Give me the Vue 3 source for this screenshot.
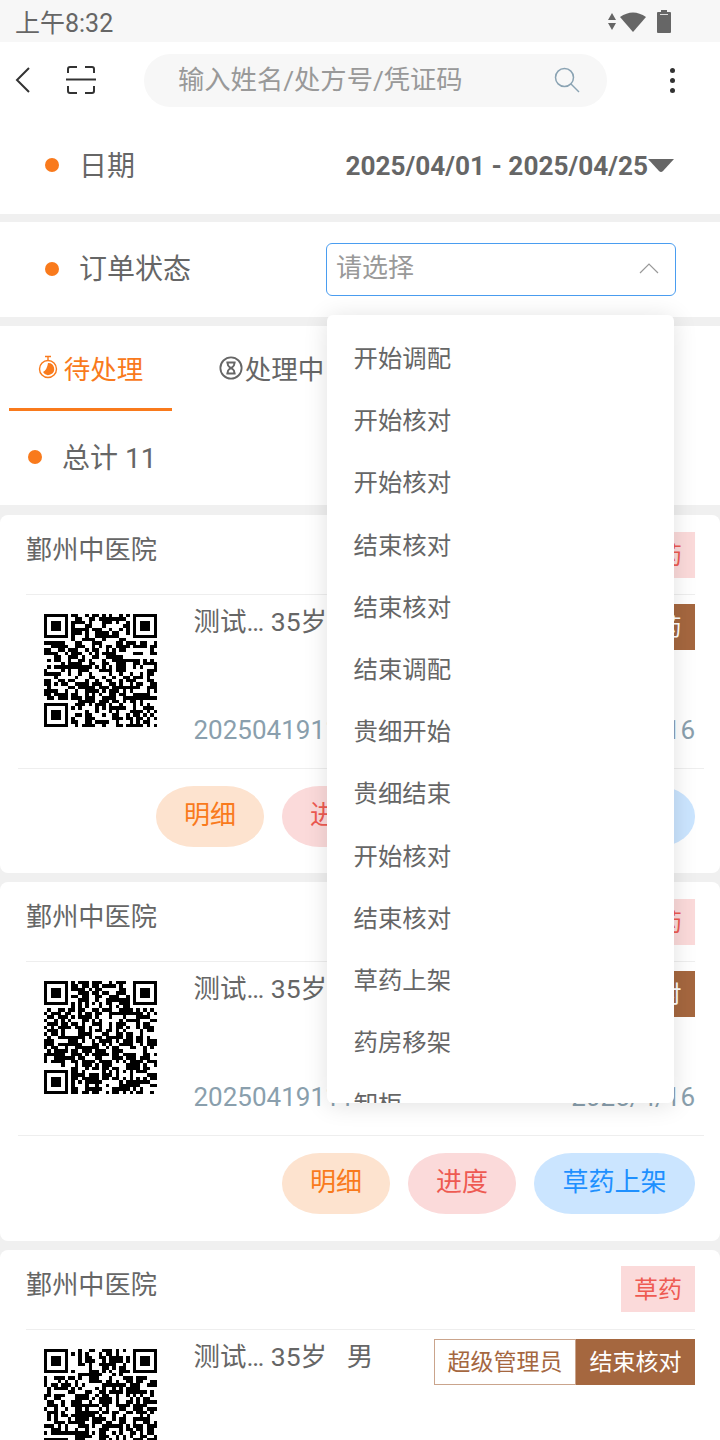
<template>
  <div class="page">
    <div class="status-bar">
      <span class="clock">上午8:32</span>
      <div class="status-icons">
        <svg class="arrows" width="8" height="17" viewBox="0 0 8 17"><path d="M4 0 L8 7 H0 Z M0 10 H8 L4 17 Z" fill="#666"/></svg>
        <svg class="wifi" width="26" height="21" viewBox="0 0 26 21"><path d="M0 6 Q13 -3 26 6 L13 21 Z" fill="#666"/></svg>
        <svg width="14" height="23" viewBox="0 0 14 23"><path d="M4 0 H10 V2 H13 Q14 2 14 3 V22 Q14 23 13 23 H1 Q0 23 0 22 V3 Q0 2 1 2 H4 Z" fill="#666"/><path d="M3 4.5 H11" stroke="#ddd" stroke-width="1"/></svg>
      </div>
    </div>

    <div class="nav">
      <svg class="back" width="18" height="28" viewBox="0 0 18 28"><path d="M15 2 L3 14 L15 26" fill="none" stroke="#333" stroke-width="2"/></svg>
      <svg class="scan" width="30" height="30" viewBox="0 0 30 30" fill="none" stroke="#333" stroke-width="2">
        <path d="M2 8 V4 Q2 2 4 2 H11 M19 2 H26 Q28 2 28 4 V8 M2 21 V26 Q2 28 4 28 H11 M19 28 H26 Q28 28 28 26 V21"/>
        <path d="M0 14.5 H30"/>
      </svg>
      <div class="search">
        <span class="search-text">输入姓名/处方号/凭证码</span>
        <svg width="26" height="26" viewBox="0 0 26 26" fill="none" stroke="#8aa3b3" stroke-width="1.5"><circle cx="10.5" cy="10.5" r="9"/><path d="M17 17 L25 25"/></svg>
      </div>
      <div class="more"><i></i><i></i><i></i></div>
    </div>

    <div class="row date-row">
      <span class="dot"></span>
      <span class="label">日期</span>
      <span class="date-range">2025/04/01 - 2025/04/25</span>
      <svg class="caret" width="26" height="15" viewBox="0 0 26 15"><path d="M0 1 H26 L15 13 Q13 15 11 13 Z" fill="#666"/></svg>
    </div>

    <div class="row status-row">
      <span class="dot"></span>
      <span class="label">订单状态</span>
      <div class="select">
        <span>请选择</span>
        <svg width="20" height="12" viewBox="0 0 20 12"><path d="M1 11 L10 2 L19 11" fill="none" stroke="#999" stroke-width="1.2"/></svg>
      </div>
    </div>

    <div class="tabs">
      <div class="tab active">
        <svg width="20" height="24" viewBox="0 0 20 24"><circle cx="10" cy="14" r="8.5" fill="none" stroke="#f97a1c" stroke-width="1.4"/><path d="M7 1.5 H13 M10 2 V5" stroke="#f97a1c" stroke-width="1.4"/><path d="M10 8 A6 6 0 1 1 5 17 Q9 15 10 8 Z" fill="#f97a1c"/></svg>
        <span>待处理</span>
      </div>
      <div class="tab">
        <svg width="24" height="24" viewBox="0 0 26 26" fill="none" stroke="#666" stroke-width="2"><circle cx="13" cy="13" r="11.5"/><path d="M8 7 H18 M8 19 H18 M9.5 7 V9 Q9.5 11 13 13 Q16.5 11 16.5 9 V7 M9.5 19 V17 Q9.5 15 13 13 Q16.5 15 16.5 17 V19"/></svg>
        <span>处理中</span>
      </div>
    </div>

    <div class="total">
      <span class="dot"></span>
      <span class="label">总计 11</span>
    </div>

    <div v-for="card in cards" :key="card.id" class="card">
      <div class="card-head">
        <span class="hospital">鄞州中医院</span>
        <span class="kind">草药</span>
      </div>
      <div class="card-body">
        <svg class="qr" viewBox="0 0 33 33" shape-rendering="crispEdges"><path :d="card.qr" fill="#000"/></svg>
        <div class="info">
          <div class="info-top">
            <span class="person">测试… 35岁&nbsp;&nbsp;&nbsp;男</span>
            <div class="flags">
              <span class="flag-user">超级管理员</span>
              <span class="flag-step">{{ card.step }}</span>
            </div>
          </div>
          <div class="info-bottom">
            <span>20250419111</span>
            <span>2025/4/16</span>
          </div>
        </div>
      </div>
      <div class="card-actions">
        <button v-for="a in card.actions" :key="a.text" :class="['pill', a.type]">{{ a.text }}</button>
      </div>
    </div>

    <div class="dropdown">
      <div v-for="(item, i) in options" :key="i" class="option">{{ item }}</div>
    </div>
  </div>
</template>

<script setup>
const options = ['开始调配', '开始核对', '开始核对', '结束核对', '结束核对', '结束调配', '贵细开始', '贵细结束', '开始核对', '结束核对', '草药上架', '药房移架', '卸柜']

// not a real code, just fixed-seed modules with the three finder squares
function makeQr(seed) {
  let s = seed
  const rnd = () => {
    s = (s * 1103515245 + 12345) & 0x7fffffff
    return (s >> 16) / 32767
  }
  const size = 33
  let d = ''
  const inFinder = (x, y, ox, oy) => x >= ox && x < ox + 8 && y >= oy && y < oy + 8
  const finder = (ox, oy) => {
    d += `M${ox} ${oy}h7v7h-7zM${ox + 1} ${oy + 1}v5h5v-5zM${ox + 2} ${oy + 2}h3v3h-3z`
  }
  finder(0, 0)
  finder(26, 0)
  finder(0, 26)
  for (let y = 0; y < size; y++) {
    for (let x = 0; x < size; x++) {
      if (inFinder(x, y, 0, 0) || inFinder(x, y, 25, 0) || inFinder(x, y, 0, 25)) continue
      if (rnd() > 0.45) d += `M${x} ${y}h1v1h-1z`
    }
  }
  return d
}

const cards = [
  {
    id: 1,
    step: '开始配药',
    qr: makeQr(17),
    actions: [
      { text: '明细', type: 'orange' },
      { text: '进度', type: 'red' },
      { text: '撤销', type: 'red' },
      { text: '草药上架', type: 'blue' }
    ]
  },
  {
    id: 2,
    step: '结束核对',
    qr: makeQr(91),
    actions: [
      { text: '明细', type: 'orange' },
      { text: '进度', type: 'red' },
      { text: '草药上架', type: 'blue' }
    ]
  },
  {
    id: 3,
    step: '结束核对',
    qr: makeQr(203),
    actions: []
  }
]
</script>

<style>
body {
  background: #f0f0f0;
}
</style>

<style scoped>
.page {
  position: relative;
  width: 720px;
  height: 1440px;
  overflow: hidden;
  background: #f0f0f0;
  color: #666;
  font-family: Roboto, "Noto Sans CJK SC", sans-serif;
}

.status-bar {
  height: 42px;
  background: #f7f7f7;
  display: flex;
  align-items: center;
  justify-content: space-between;
  padding: 0 49px 0 15px;
}

.clock {
  font-size: 25px;
}

.status-icons {
  display: flex;
  align-items: center;
}

.arrows {
  margin-right: 4px;
}

.wifi {
  margin-right: 11px;
}

.nav {
  height: 76px;
  background: #fff;
  display: flex;
  align-items: center;
  padding-left: 14px;
  box-sizing: border-box;
}

.scan {
  margin-left: 34px;
}

.search {
  width: 463px;
  height: 53px;
  margin-left: 48px;
  border-radius: 27px;
  background: #f7f7f7;
  display: flex;
  align-items: center;
  justify-content: space-between;
  padding: 0 27px 0 34px;
  box-sizing: border-box;
}

.search-text {
  font-size: 26.3px;
  color: #999;
  margin-bottom: 5px;
}

.more {
  margin-left: 63px;
  display: flex;
  flex-direction: column;
  gap: 5px;
}

.more i {
  display: block;
  width: 5px;
  height: 5px;
  border-radius: 50%;
  background: #333;
}

.row {
  background: #fff;
  display: flex;
  align-items: center;
  padding-left: 45px;
}

.date-row {
  height: 96px;
  margin-bottom: 8px;
}

.status-row {
  height: 95px;
  margin-bottom: 9px;
}

.dot {
  width: 14px;
  height: 14px;
  border-radius: 50%;
  background: #f97a1c;
  flex: none;
  margin-bottom: 2px;
}

.label {
  margin-left: 20px;
  margin-bottom: 5px;
  font-size: 28px;
}

.date-range {
  margin-left: auto;
  font-size: 26.2px;
  font-weight: 700;
}

.caret {
  margin: 0 46px 2px 0;
}

.select {
  margin-left: auto;
  margin-right: 44px;
  width: 350px;
  height: 53px;
  border: 1px solid #4a9df0;
  border-radius: 6px;
  box-sizing: border-box;
  display: flex;
  align-items: center;
  justify-content: space-between;
  padding: 0 16px 4px 9px;
  font-size: 26px;
  color: #999;
}

.select span {
  margin-bottom: 4px;
}

.tabs {
  height: 85px;
  background: #fff;
  display: flex;
  padding-left: 9px;
}

.tab {
  width: 163px;
  height: 85px;
  box-sizing: border-box;
  display: flex;
  align-items: center;
  justify-content: center;
  gap: 2px;
  padding-bottom: 2px;
  font-size: 26.5px;
  margin-right: 18px;
}

.tab.active {
  color: #f97a1c;
  border-bottom: 3px solid #f97a1c;
  padding-bottom: 0;
  gap: 6px;
}

.total {
  height: 94px;
  background: #fff;
  margin-bottom: 10px;
  display: flex;
  align-items: center;
  padding-left: 28px;
}

.card {
  background: #fff;
  border-radius: 8px;
  margin-bottom: 9px;
  height: 358.4px;
  padding: 0 25px 0 18px;
  box-sizing: border-box;
}

.card-head {
  height: 80px;
  box-sizing: border-box;
  display: flex;
  align-items: center;
  justify-content: space-between;
  margin-left: 8px;
  padding-left: 1px;
  border-bottom: 1px solid #eee;
}

.hospital {
  font-size: 26.2px;
  margin-bottom: 13px;
  margin-left: -1px;
}

.kind {
  width: 74px;
  height: 46px;
  background: #fbdada;
  color: #ee5a52;
  font-size: 24px;
  display: flex;
  align-items: center;
  justify-content: center;
  padding-bottom: 3px;
  box-sizing: border-box;
}

.card-body {
  height: 174px;
  display: flex;
  box-sizing: border-box;
  border-bottom: 1px solid #eee;
  margin-right: -9px;
  padding: 19px 9px 0 26px;
}

.qr {
  width: 113px;
  height: 113px;
  flex: none;
}

.info {
  flex: 1;
  margin-left: 36.5px;
}

.info-top {
  display: flex;
  justify-content: space-between;
  margin-top: -10px;
}

.person {
  font-size: 26.5px;
  line-height: 36px;
}

.flags {
  display: flex;
  height: 46px;
  font-size: 23px;
}

.flag-user {
  width: 142px;
  box-sizing: border-box;
  border: 1px solid #caa48c;
  color: #a5673f;
  display: flex;
  align-items: center;
  justify-content: center;
  padding-bottom: 4px;
}

.flag-step {
  width: 119px;
  background: #a5673f;
  color: #fff;
  display: flex;
  align-items: center;
  justify-content: center;
  padding-bottom: 4px;
  box-sizing: border-box;
}

.info-bottom {
  display: flex;
  justify-content: space-between;
  margin-top: 65px;
  font-size: 26px;
  color: #8a9fad;
}

.card-actions {
  display: flex;
  justify-content: flex-end;
  gap: 18px;
  padding-top: 17px;
}

.pill {
  height: 61px;
  min-width: 108px;
  padding: 0 28px 8px;
  border: 0;
  border-radius: 38px / 30px;
  font: inherit;
  font-size: 26px;
  box-sizing: border-box;
}

.orange {
  background: #fde3cf;
  color: #f97a1c;
}

.red {
  background: #fbdada;
  color: #ee5a52;
}

.blue {
  background: #cbe5ff;
  color: #1e90ff;
  padding: 0 28.5px 8px;
}

.dropdown {
  position: absolute;
  left: 327px;
  top: 315px;
  width: 347px;
  height: 788px;
  overflow: hidden;
  background: #fff;
  border-radius: 6px;
  box-shadow: 0 2px 24px rgba(0, 0, 0, 0.12);
  padding-top: 13px;
  box-sizing: border-box;
}

.option {
  height: 62.2px;
  line-height: 62px;
  padding-left: 26.5px;
  font-size: 24.4px;
}
</style>
